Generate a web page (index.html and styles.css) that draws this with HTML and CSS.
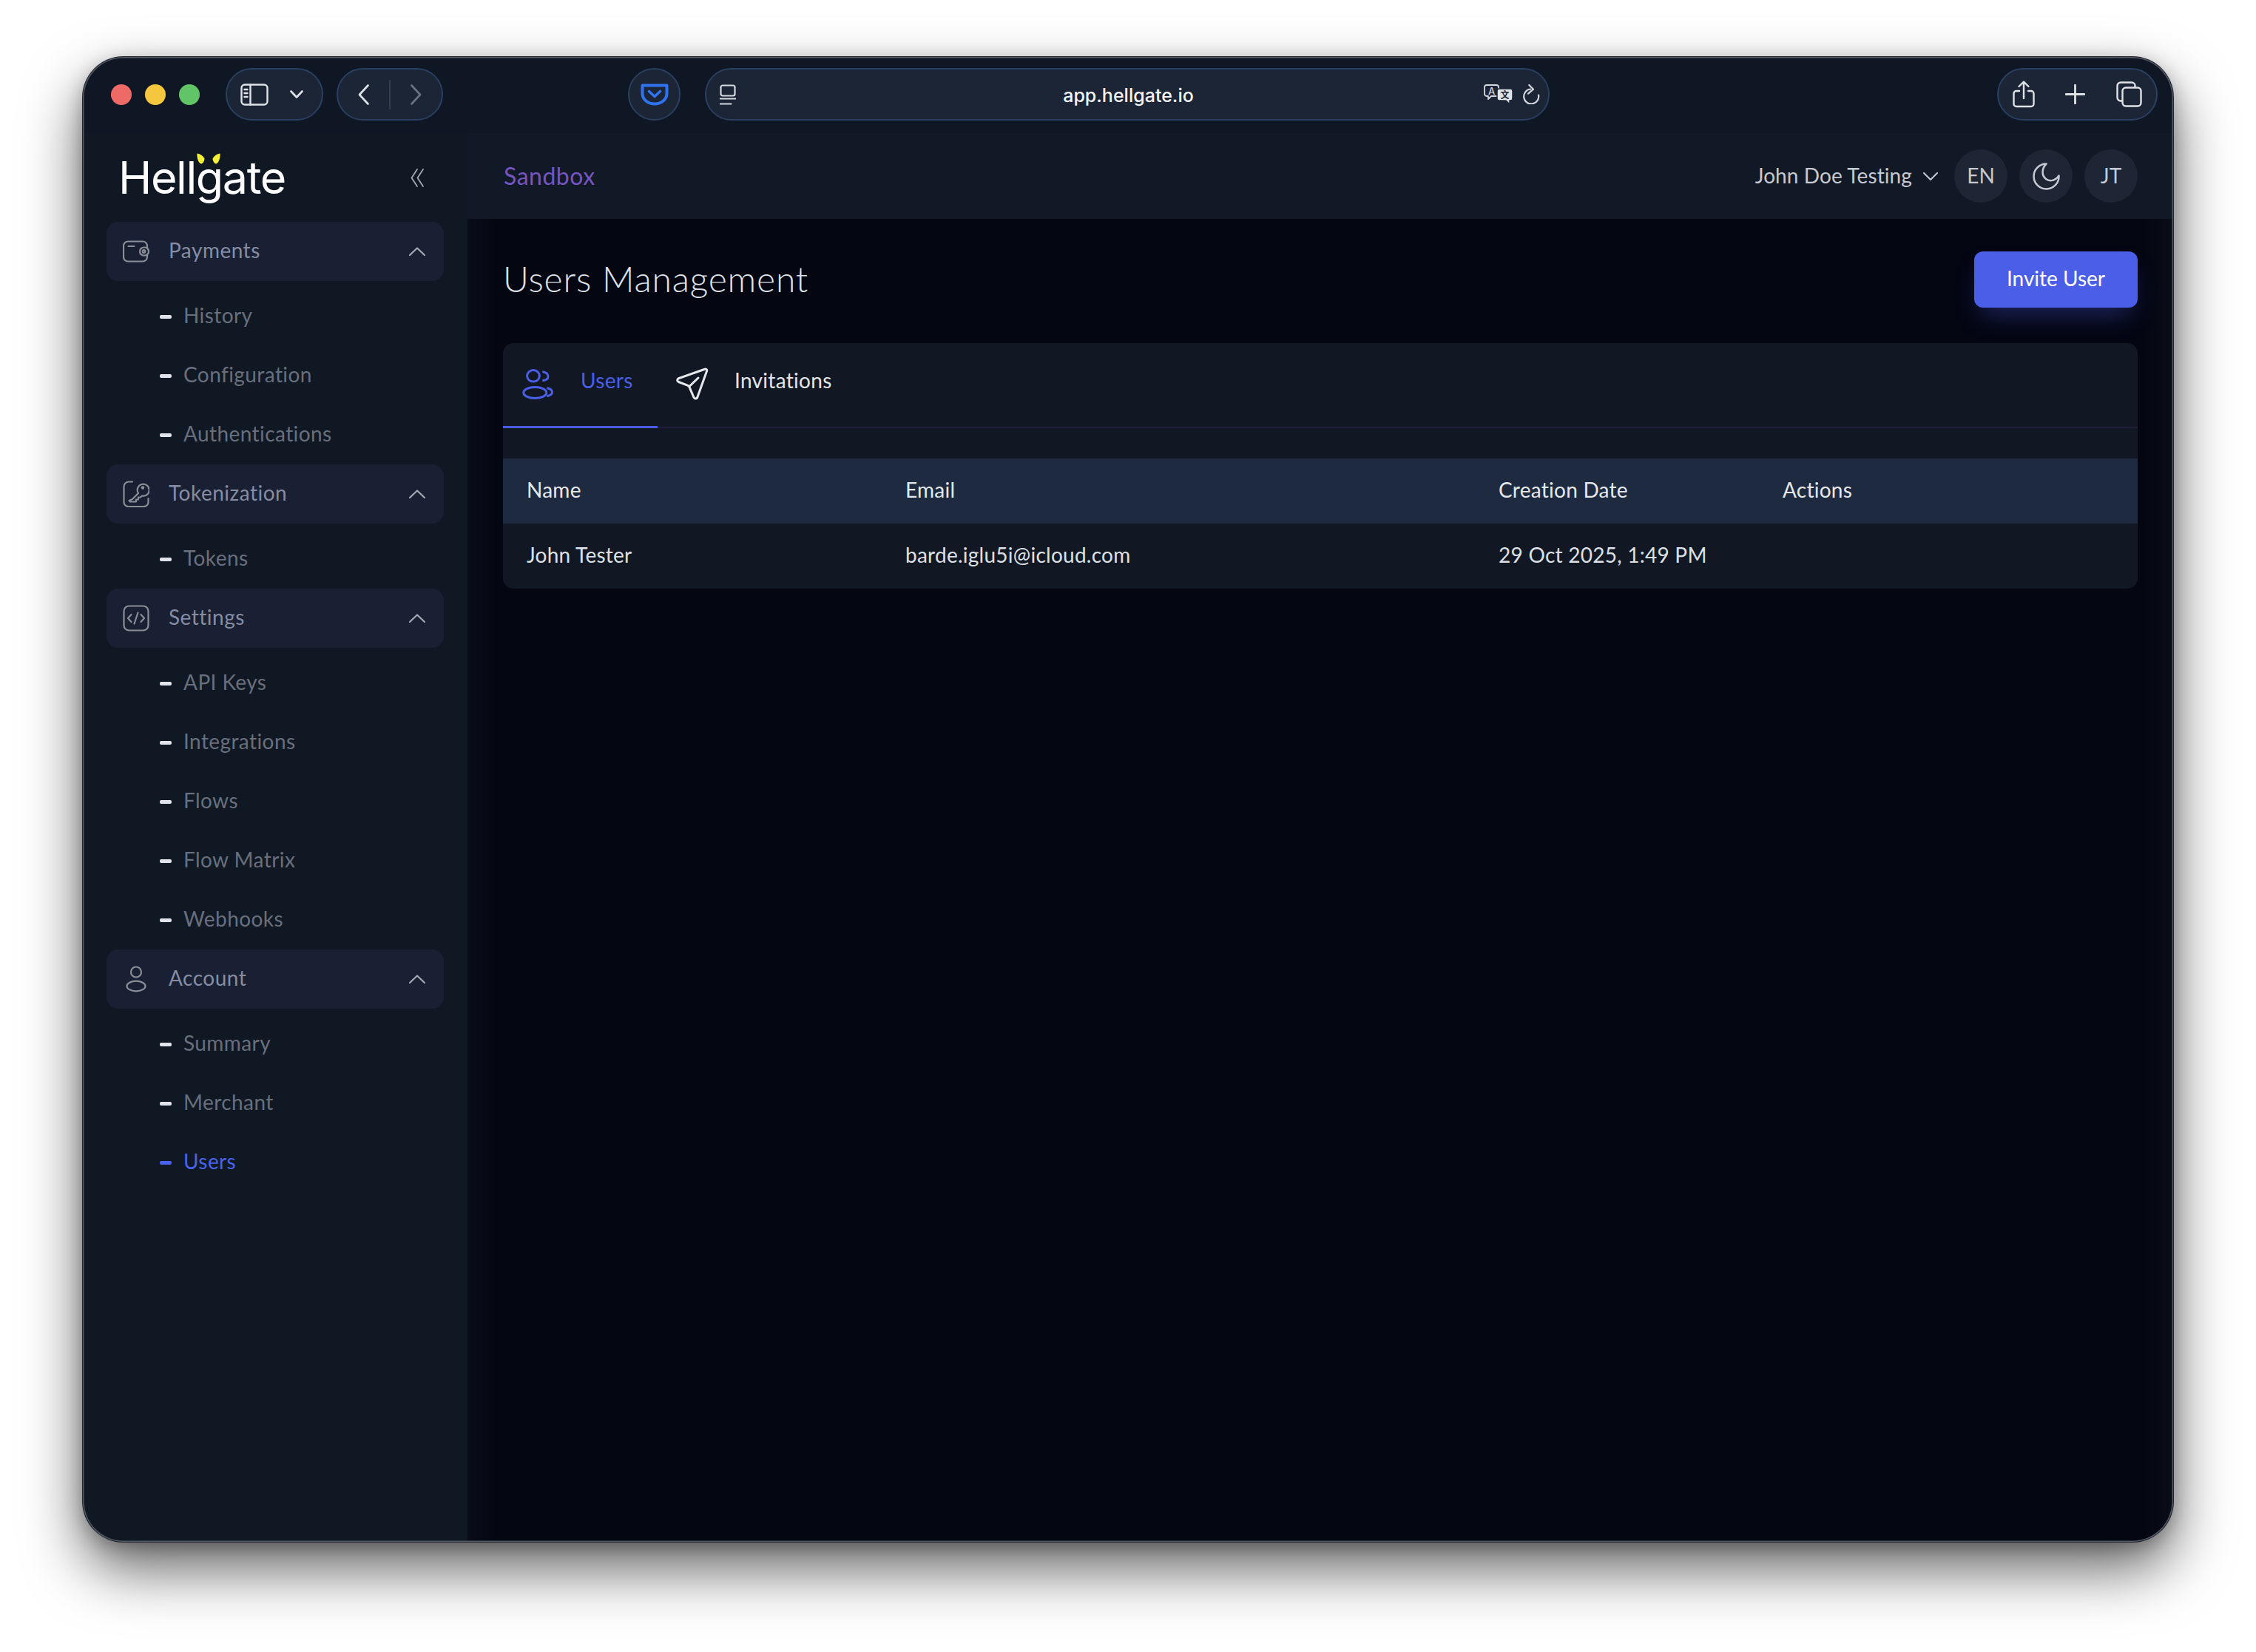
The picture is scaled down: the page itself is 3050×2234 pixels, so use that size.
FILE: index.html
```html
<!DOCTYPE html>
<html lang="en">
<head>
<meta charset="utf-8">
<title>Hellgate - Users Management</title>
<link rel="stylesheet" href="styles.css">
</head>
<body>
<div class="window">
  <header class="chrome">
    <div class="lights"><span class="light red"></span><span class="light yellow"></span><span class="light green"></span></div>
    <div class="pill pill-side">
      <svg class="ic" width="38" height="30" viewBox="0 0 38 30"><rect x="1.500" y="1.500" width="35" height="27" rx="4.500"/><path d="M13.500 1.500v27"/><path d="M5.500 8h4M5.500 13h4M5.500 18h4"/></svg>
      <svg class="ic" width="18" height="11" viewBox="0 0 18 11"><path d="M1.500 1.500 9 9.500l7.500-8" stroke-width="2.600"/></svg>
    </div>
    <div class="pill pill-nav">
      <svg class="ic" width="15" height="28" viewBox="0 0 15 28"><path d="M13.500 1.500 2 14l11.500 12.500" stroke-width="2.600"/></svg>
      <span class="nav-div"></span>
      <svg class="ic ic-dim" width="15" height="28" viewBox="0 0 15 28"><path d="M1.500 1.500 13 14 1.500 26.500" stroke-width="2.600"/></svg>
    </div>
    <div class="pill pill-pocket">
      <svg width="38" height="30" viewBox="0 0 38 30" fill="none" stroke="#2f73f0" stroke-linecap="round" stroke-linejoin="round"><path d="M2.500 2.500h33v11c0 8-7.500 14-16.500 14S2.500 21.500 2.500 13.500z" stroke-width="4"/><path d="M11.500 10.500 19 17.500l7.500-7" stroke-width="3.600"/></svg>
    </div>
    <div class="pill address">
      <svg class="ic ic-thin addr-left" width="22" height="28" viewBox="0 0 22 28"><rect x="1.500" y="1.500" width="19" height="14" rx="2.500"/><path d="M.5 19.500h21M.5 26.500h15"/></svg>
      <span class="url">app.hellgate.io</span>
      <div class="addr-right">
        <svg class="translate" width="40" height="28" viewBox="0 0 40 28"><path d="M4 1h13a3 3 0 0 1 3 3v9a3 3 0 0 1-3 3H10l-4 4v-4H4a3 3 0 0 1-3-3V4a3 3 0 0 1 3-3z" fill="#1b2536" stroke="#d5d8de" stroke-width="1.800" stroke-linejoin="round"/><text x="10.500" y="13.500" class="tr-a">A</text><path d="M21 6h15a3 3 0 0 1 3 3v10a3 3 0 0 1-3 3h-1v5l-5-5h-9a3 3 0 0 1-3-3V9a3 3 0 0 1 3-3z" fill="#dfe2e7" stroke="#1b2536" stroke-width="1.500"/><text x="28.500" y="19" class="tr-b">文</text></svg>
        <svg class="ic ic-thin" width="24" height="27" viewBox="0 0 24 27"><path d="M11 6.500A10 10 0 1 0 22 14.500"/><path d="M9.300 1 15 6.700l-7 6"/></svg>
      </div>
    </div>
    <div class="pill pill-tools">
      <svg class="ic" width="30" height="37" viewBox="0 0 30 37"><path d="M9 14H5a3.500 3.500 0 0 0-3.500 3.500v14A3.500 3.500 0 0 0 5 35h20a3.500 3.500 0 0 0 3.500-3.500v-14A3.500 3.500 0 0 0 25 14h-4"/><path d="M15 24V2M8.500 8 15 1.500 21.500 8"/></svg>
      <svg class="ic" width="27" height="27" viewBox="0 0 27 27"><path d="M13.500 1v25M1 13.500h25" stroke-width="2.800"/></svg>
      <svg class="ic" width="35" height="35" viewBox="0 0 35 35"><path d="M7.500 26.500H6A4.500 4.500 0 0 1 1.500 22V6A4.500 4.500 0 0 1 6 1.500h15A4.500 4.500 0 0 1 25.500 6v1.500"/><rect x="8.500" y="8.500" width="25" height="25" rx="4.500"/></svg>
    </div>
  </header>

  <div class="frame">
    <nav class="side">
      <div class="brand">
        <div class="logo">Hellgate
          <svg class="horns" width="32" height="15" viewBox="0 0 32 15"><path d="M.5.5c4 .6 8 3 10 7-.3 3.500-2 6.500-4.500 7C2.500 14 0 7 .5.500z"/><path d="M31.500.5c.5 6.500-2 13.500-5.500 14-2.500-.5-4.200-3.500-4.500-7 2-4 6-6.400 10-7z"/></svg>
        </div>
        <svg class="ic ic-collapse" width="18" height="25" viewBox="0 0 18 25"><path d="M9 1 1.500 12.500 9 24M17 1 9.500 12.500 17 24" stroke-width="1.800"/></svg>
      </div>

      <section class="group">
        <div class="group-head">
          <svg class="ic-menu" width="36" height="30" viewBox="0 0 36 30"><rect x="1" y="1.500" width="32" height="27" rx="6"/><path d="M7.500 8h8"/><rect x="23" y="9.500" width="12" height="11" rx="5.500" fill="#192033"/><circle cx="28.500" cy="15" r="1.800"/></svg>
          <span class="group-name">Payments</span>
          <svg class="chev-up" width="22" height="12" viewBox="0 0 22 12"><path d="M1 11 11 1.500 21 11"/></svg>
        </div>
        <ul class="subs">
          <li class="sub"><span class="dash"></span>History</li>
          <li class="sub"><span class="dash"></span>Configuration</li>
          <li class="sub"><span class="dash"></span>Authentications</li>
        </ul>
      </section>

      <section class="group">
        <div class="group-head">
          <svg class="ic-menu" width="36" height="36" viewBox="0 0 36 36"><path d="M13 1.500H8A6.500 6.500 0 0 0 1.500 8v21A6 6 0 0 0 7.500 35h21a6 6 0 0 0 6-6v-5"/><path d="M13 25l8-8a8 8 0 1 1 5 3.500L24 22.500h-3v3h-3v3H10l-1.500-1.500z"/><circle cx="27" cy="9.500" r="1.200"/></svg>
          <span class="group-name">Tokenization</span>
          <svg class="chev-up" width="22" height="12" viewBox="0 0 22 12"><path d="M1 11 11 1.500 21 11"/></svg>
        </div>
        <ul class="subs">
          <li class="sub"><span class="dash"></span>Tokens</li>
        </ul>
      </section>

      <section class="group">
        <div class="group-head">
          <svg class="ic-menu" width="36" height="36" viewBox="0 0 36 36"><rect x="1.500" y="1.500" width="33" height="33" rx="7"/><path d="M11.500 13 7 18l4.500 5M24.500 13l4.500 5-4.500 5M20.500 10.500l-5 15"/></svg>
          <span class="group-name">Settings</span>
          <svg class="chev-up" width="22" height="12" viewBox="0 0 22 12"><path d="M1 11 11 1.500 21 11"/></svg>
        </div>
        <ul class="subs">
          <li class="sub"><span class="dash"></span>API Keys</li>
          <li class="sub"><span class="dash"></span>Integrations</li>
          <li class="sub"><span class="dash"></span>Flows</li>
          <li class="sub"><span class="dash"></span>Flow Matrix</li>
          <li class="sub"><span class="dash"></span>Webhooks</li>
        </ul>
      </section>

      <section class="group">
        <div class="group-head">
          <svg class="ic-menu" width="36" height="36" viewBox="0 0 36 36"><circle cx="18" cy="8.500" r="7"/><ellipse cx="18" cy="27.500" rx="12.500" ry="6.800"/></svg>
          <span class="group-name">Account</span>
          <svg class="chev-up" width="22" height="12" viewBox="0 0 22 12"><path d="M1 11 11 1.500 21 11"/></svg>
        </div>
        <ul class="subs">
          <li class="sub"><span class="dash"></span>Summary</li>
          <li class="sub"><span class="dash"></span>Merchant</li>
          <li class="sub sub-active"><span class="dash"></span>Users</li>
        </ul>
      </section>
    </nav>

    <main class="main">
      <div class="topbar">
        <span class="env">Sandbox</span>
        <div class="top-right">
          <span class="merchant">John Doe Testing</span>
          <svg class="merchant-chev" width="20" height="11" viewBox="0 0 20 11"><path d="M1 1l9 9 9-9"/></svg>
          <span class="round round-first">EN</span>
          <span class="round round-icon"><svg class="moon" width="38" height="38" viewBox="0 0 38 38"><path d="M19.500 2.500A17 17 0 1 0 36.500 18.500C32 25.500 24 27 19 23 13 18.500 13 9 19.500 2.500z"/></svg></span>
          <span class="round">JT</span>
        </div>
      </div>

      <div class="content">
        <div class="title-row">
          <h1 class="title">Users Management</h1>
          <button class="invite" type="button">Invite User</button>
        </div>

        <div class="card">
          <div class="tabs">
            <div class="tab tab-active">
              <svg width="42" height="41" viewBox="0 0 42 41" class="tab-ic"><ellipse cx="15" cy="9.300" rx="8.400" ry="7.800"/><ellipse cx="17.300" cy="32" rx="15.500" ry="7.500"/><path d="M28.500 4c3.500.2 6.500 3 6.500 6s-3 5-6.500 5.500M34.500 26c3.500.8 6 3 6 5.500s-2.500 4-6 5"/></svg>
              <span>Users</span>
            </div>
            <div class="tab">
              <svg width="44" height="44" viewBox="0 0 44 44" class="tab-ic"><path d="M38 2.500 4 14.500c-3 1.200-3 4-.5 5l12 4.700c1.200.5 2 1.200 2.600 2.400L23.800 40c1.500 3 4.500 2.500 5.300-.5L41.500 5c.8-2.500-1-3.500-3.500-2.500z"/><path d="M18 25.500 30 14"/></svg>
              <span>Invitations</span>
            </div>
          </div>
          <div class="table-row table-head">
            <span>Name</span><span>Email</span><span>Creation Date</span><span>Actions</span>
          </div>
          <div class="table-row">
            <span>John Tester</span><span>barde.iglu5i@icloud.com</span><span>29 Oct 2025, 1:49 PM</span><span></span>
          </div>
        </div>
      </div>
    </main>
  </div>
</div>
</body>
</html>
```
FILE: styles.css
```css
* { box-sizing: border-box; }
html, body { margin: 0; padding: 0; }
body {
  width: 3050px;
  height: 2234px;
  padding: 77px 112px 149px;
  background: #fff;
  font-family: Lato, "Noto Sans", sans-serif;
  overflow: hidden;
}
ul { list-style: none; margin: 0; padding: 0; }

.window {
  position: relative;
  width: 2826px;
  height: 2008px;
  border-radius: 55px;
  background: #0f1724;
  display: flex;
  flex-direction: column;
  box-shadow: 0 0 0 1px #23262c, 0 36px 80px rgba(0,0,0,.62), 0 6px 24px rgba(0,0,0,.25);
}
.window::after {
  content: "";
  position: absolute;
  inset: 0;
  border-radius: 55px;
  box-shadow: inset 0 0 0 1.5px #535965;
  pointer-events: none;
}

/* browser chrome */
.chrome {
  height: 103px;
  flex: none;
  display: flex;
  align-items: flex-start;
  padding: 15px 21px 0 38px;
}
.lights { display: flex; gap: 18px; margin-top: 22px; }
.light { width: 28px; height: 28px; border-radius: 50%; }
.red { background: #ee6a67; }
.yellow { background: #f5c73f; }
.green { background: #61c466; }
.pill {
  height: 71px;
  border-radius: 36px;
  background: #1b2536;
  border: 2px solid #2a3f62;
  display: flex;
  align-items: center;
  flex: none;
}
.ic { fill: none; stroke: #dfe2e7; stroke-width: 2.4; stroke-linecap: round; stroke-linejoin: round; flex: none; }
.ic-thin { stroke-width: 2.2; stroke: #d5d8de; }
.ic-dim { stroke: #6b7280; }
.pill-side { width: 132px; margin-left: 35px; padding-left: 18px; gap: 29px; }
.pill-nav { width: 144px; margin-left: 18px; padding-left: 27px; }
.nav-div { width: 2px; height: 40px; background: #343d4c; margin: 0 27px; }
.pill-pocket { width: 71px; margin-left: 250px; justify-content: center; }
.address {
  width: 1142px;
  margin-left: 33px;
  display: grid;
  grid-template-columns: 1fr auto 1fr;
  align-items: center;
  padding: 0 11px 0 18px;
}
.addr-left { justify-self: start; }
.url { font-family: Inter, sans-serif; font-weight: 500; font-size: 25px; color: #f3f4f6; padding: 2px 4px 0 0; }
.addr-right { justify-self: end; display: flex; align-items: center; gap: 12px; }
.tr-a { font: 500 13px Inter, sans-serif; fill: #d5d8de; text-anchor: middle; }
.tr-b { font: 700 12px "Noto Sans CJK SC", sans-serif; fill: #1b2536; text-anchor: middle; }
.pill-tools { width: 217px; margin-left: auto; padding-left: 19px; gap: 41px; }
.pill-tools .ic + .ic + .ic { margin-left: 1px; }

/* frame */
.frame { flex: 1; display: flex; min-height: 0; }
.side {
  width: 520px;
  flex: none;
  background: #101824;
  border-bottom-left-radius: 55px;
}
.brand {
  height: 120px;
  display: flex;
  align-items: center;
  justify-content: space-between;
  padding: 0 59px 0 48px;
}
.logo {
  position: relative;
  font-family: Inter, sans-serif;
  font-weight: 400;
  font-size: 61px;
  letter-spacing: -1.4px;
  line-height: 1;
  color: #fff;
}
.horns { position: absolute; left: 106px; top: -3px; fill: #f6f134; }
.ic-collapse { stroke: #a4a8b0; }

.group-head {
  height: 80px;
  margin: 0 32px;
  padding: 0 25px 0 22px;
  border-radius: 16px;
  background: #192033;
  display: flex;
  align-items: center;
}
.ic-menu { width: 36px; flex: none; fill: none; stroke: #8a8e97; stroke-width: 2.2; stroke-linecap: round; stroke-linejoin: round; }
.group-name { margin-left: 26px; padding-bottom: 4px; font-size: 28px; letter-spacing: .5px; color: #868da3; flex: 1; }
.chev-up { fill: none; stroke: #a6aab2; stroke-width: 2.2; stroke-linecap: round; stroke-linejoin: round; }
.subs { padding-top: 8px; }
.sub {
  height: 80px;
  padding: 0 0 4px 104px;
  display: flex;
  align-items: center;
  font-size: 28px;
  letter-spacing: .42px;
  color: #686f7d;
}
.dash { width: 16px; height: 5px; border-radius: 2px; background: #e0e3e8; margin: 4px 16px 0 0; flex: none; }
.sub-active { color: #4a63ee; }
.sub-active .dash { background: #4a63ee; }

/* main */
.main {
  flex: 1;
  min-width: 0;
  background: linear-gradient(90deg, #0a0d19 0, #040612 40px, #040612 calc(100% - 40px), #0a0d18 100%);
  border-bottom-right-radius: 55px;
  display: flex;
  flex-direction: column;
}
.topbar {
  height: 116px;
  flex: none;
  padding: 0 48px 0 49px;
  background: #111926;
  display: flex;
  align-items: center;
  justify-content: space-between;
}
.env { font-size: 32px; letter-spacing: .5px; color: #7555c2; padding-bottom: 2px; }
.top-right { display: flex; align-items: center; }
.merchant { font-size: 28px; letter-spacing: .1px; color: #c5c9d2; margin-right: 15px; padding-bottom: 3px; }
.merchant-chev { fill: none; stroke: #c5c9d2; stroke-width: 2; stroke-linecap: round; stroke-linejoin: round; }
.round {
  width: 72px;
  height: 72px;
  margin-left: 16px;
  padding-bottom: 2px;
  border-radius: 50%;
  background: #1e2535;
  color: #c5c9d2;
  font-size: 28px;
  display: flex;
  align-items: center;
  justify-content: center;
}
.round-icon { padding-bottom: 0; }
.round-first { margin-left: 22px; }
.moon { fill: none; stroke: #c5c9d2; stroke-width: 2.5; stroke-linejoin: round; }

.content { padding: 44px 48px 0 48px; }
.title-row { display: flex; align-items: center; justify-content: space-between; }
.title { margin: 0; font-size: 48px; letter-spacing: .8px; font-weight: 300; color: #dfe2e8; padding-bottom: 4px; }
.invite {
  width: 221px;
  height: 76px;
  border: 0;
  padding: 0 0 4px;
  border-radius: 12px;
  background: #4a5ee8;
  color: #fff;
  font-family: inherit;
  font-size: 28px;
  box-shadow: 0 18px 34px -10px rgba(74,94,232,.38);
}
.card {
  margin-top: 48px;
  height: 332px;
  border-radius: 14px;
  background: #111824;
  overflow: hidden;
}
.tabs { height: 115px; display: flex; border-bottom: 2px solid #201e3a; }
.tab {
  height: 115px;
  display: flex;
  align-items: center;
  padding: 0 0 12px 25px;
  gap: 35px;
  font-size: 28px;
  letter-spacing: .3px;
  color: #e2e5ea;
  border-bottom: 3px solid transparent;
}
.tab-ic { margin-top: 10px; fill: none; stroke: #e6e8ec; stroke-width: 3; stroke-linecap: round; stroke-linejoin: round; flex: none; }
.tab-active { width: 209px; padding-left: 26px; gap: 37px; color: #4a5ee8; border-bottom-color: #4a5ee8; }
.tab-active .tab-ic { stroke: #4a5ee8; }
.table-row {
  height: 88px;
  padding: 0 0 4px 32px;
  display: grid;
  grid-template-columns: 512px 802px 384px 1fr;
  align-items: center;
  font-size: 28px;
  letter-spacing: .25px;
  color: #dde0e6;
}
.table-head { margin-top: 41px; background: #1d2a40; color: #e6e8ec; }
```
